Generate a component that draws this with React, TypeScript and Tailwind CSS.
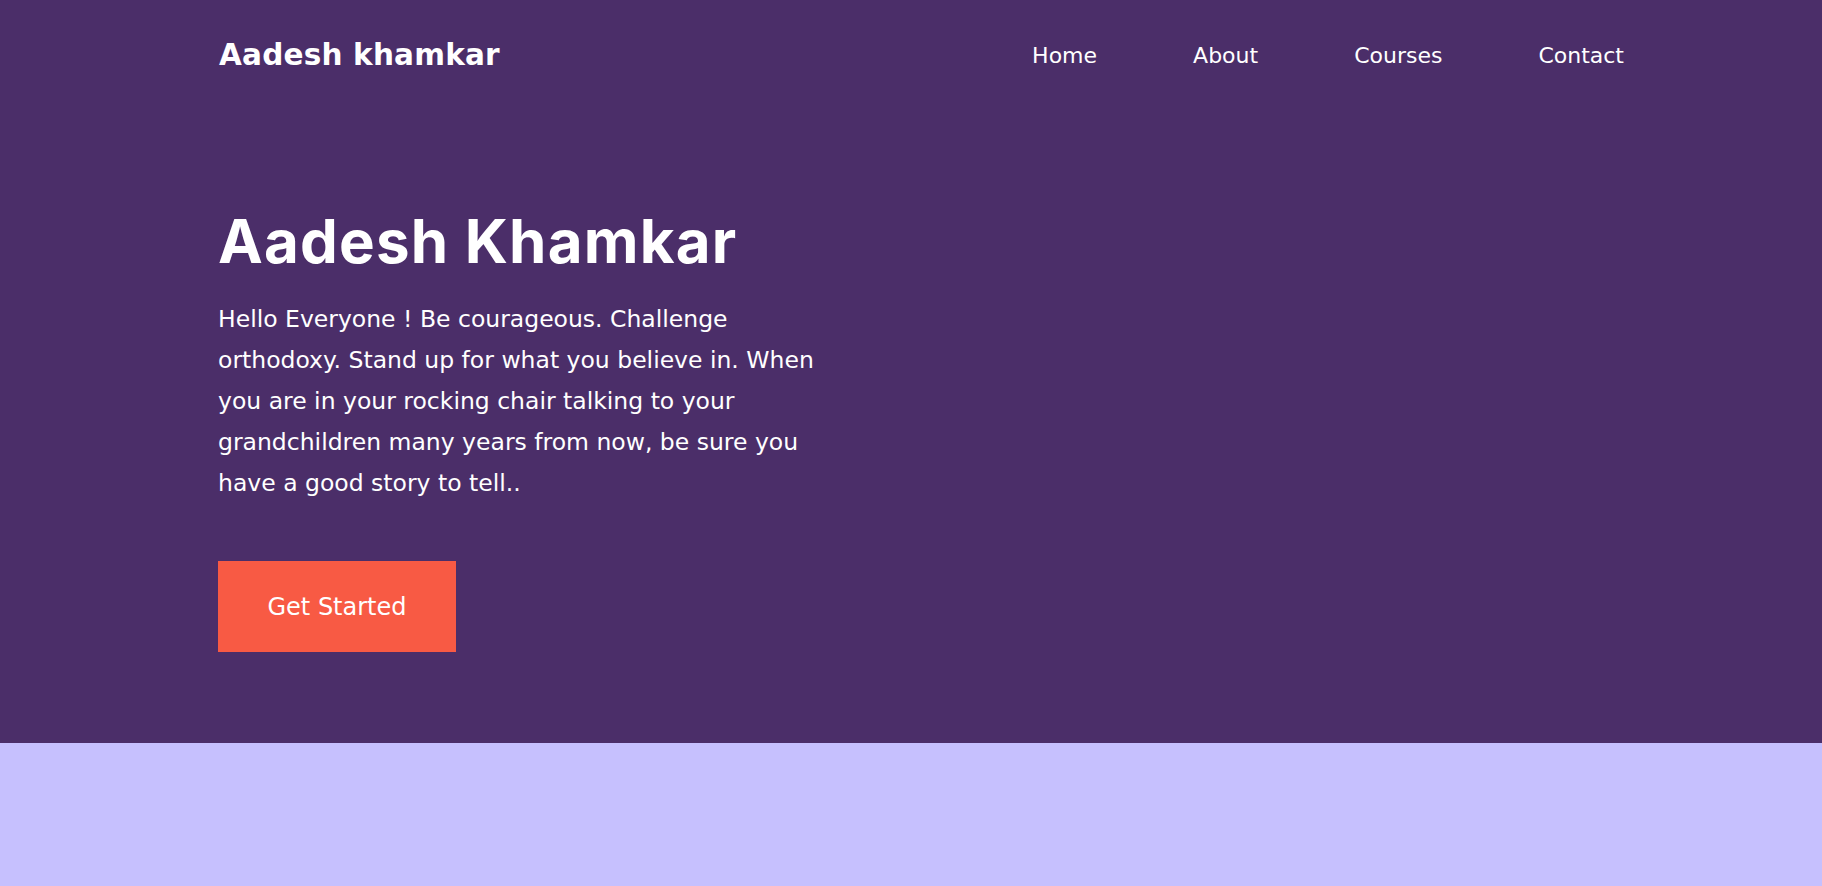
import React from 'react';

const links = ['Home', 'About', 'Courses', 'Contact'];

const App = () => {
  return (
    <div className="min-h-screen bg-[#c6c0fe] font-['DejaVu_Sans','Liberation_Sans',sans-serif]">
      {/* Hero */}
      <section className="bg-[#4b2e69] text-white">
        <nav className="flex h-[110px] items-center justify-between pl-[219px] pr-[198px]">
          <h2 className="text-[29.5px] font-bold tracking-[0.2px]">Aadesh khamkar</h2>
          <ul className="flex gap-[96px] text-[22px]">
            {links.map((link) => (
              <li key={link}>
                <a href="#" className="hover:text-[#f85a44]">{link}</a>
              </li>
            ))}
          </ul>
        </nav>

        <div className="pl-[218px] pt-[95px] pb-[91px]">
          <h1 className="font-['Inter',sans-serif] text-[60px] font-bold leading-[1.2] tracking-[1.2px]">
            Aadesh Khamkar
          </h1>
          <p className="mt-[22px] max-w-[615px] text-[23.5px] leading-[41px]">
            Hello Everyone ! Be courageous. Challenge orthodoxy. Stand up for what you believe in. When you are in your rocking chair talking to your grandchildren many years from now, be sure you have a good story to tell..
          </p>
          <button className="mt-[57px] flex h-[91px] w-[238px] items-center justify-center bg-[#f85a44] text-[24px] text-white">
            Get Started
          </button>
        </div>
      </section>

      <section className="h-[400px]" />
    </div>
  );
};

export default App;
